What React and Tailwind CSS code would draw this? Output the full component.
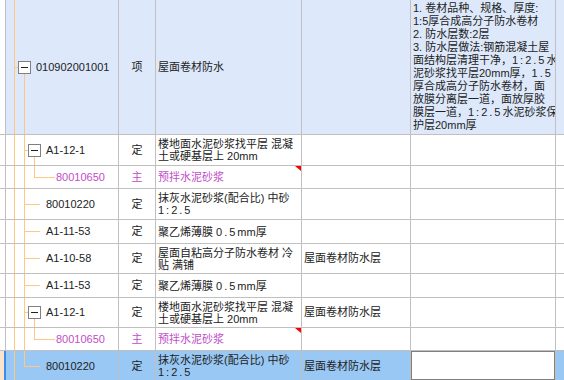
const FONT = "font-['Liberation_Sans','Noto_Sans_CJK_SC',sans-serif]"

const DESC = [
  '1. 卷材品种、规格、厚度:',
  '1:5厚合成高分子防水卷材',
  '2. 防水层数:2层',
  '3. 防水层做法:钢筋混凝土屋',
  '面结构层清理干净，1:2.5水',
  '泥砂浆找平层20mm厚，1.5',
  '厚合成高分子防水卷材，面',
  '放膜分离层一道，面放厚胶',
  '膜层一道，1:2.5水泥砂浆保',
  '护层20mm厚',
]

const ROWS = [
  { h: 135, code: '010902001001', level: 0, box: true, type: '项', name: ['屋面卷材防水'], top: true },
  { h: 31, code: 'A1-12-1', level: 1, box: true, type: '定', name: ['楼地面水泥砂浆找平层 混凝', '土或硬基层上 20mm'] },
  { h: 23, code: '80010650', level: 2, type: '主', name: ['预拌水泥砂浆'], purple: true },
  { h: 31, code: '80010220', level: 1, type: '定', name: ['抹灰水泥砂浆(配合比) 中砂', '1:2.5'] },
  { h: 24, code: 'A1-11-53', level: 1, type: '定', name: ['聚乙烯薄膜 0.5mm厚'] },
  { h: 30, code: 'A1-10-58', level: 1, type: '定', name: ['屋面自粘高分子防水卷材 冷', '贴 满铺'], feat: '屋面卷材防水层' },
  { h: 24, code: 'A1-11-53', level: 1, type: '定', name: ['聚乙烯薄膜 0.5mm厚'] },
  { h: 30, code: 'A1-12-1', level: 1, box: true, type: '定', name: ['楼地面水泥砂浆找平层 混凝', '土或硬基层上 20mm'], feat: '屋面卷材防水层' },
  { h: 23, code: '80010650', level: 2, type: '主', name: ['预拌水泥砂浆'], purple: true },
  { h: 31, code: '80010220', level: 1, type: '定', name: ['抹灰水泥砂浆(配合比) 中砂', '1:2.5'], feat: '屋面卷材防水层', selected: true, last: true },
]

// "1:2.5" and "0.5" render wide in the original grid font
function Wide({ text }) {
  const parts = text.split(/(1:2\.5|0\.5|1\.5)/)
  return parts.map((p, i) =>
    /^(1:2\.5|0\.5|1\.5)$/.test(p)
      ? <span key={i} className="tracking-[2px]">{p}</span>
      : <span key={i}>{p}</span>
  )
}

const TREE = '#ffc77f'

function Minus({ x, y }) {
  return (
    <g>
      <rect x={x + 0.5} y={y + 0.5} width="12" height="12" fill="#fff" stroke="#808080" />
      <line x1={x + 3} x2={x + 10} y1={y + 6.5} y2={y + 6.5} stroke="#222" />
    </g>
  )
}

// tree connectors drawn as one svg laid over the code cell
function Tree({ row }) {
  const h = row.h - 1
  const c = Math.floor(h / 2)
  const v = (x, y1, y2) => <line x1={x + 0.5} x2={x + 0.5} y1={y1} y2={y2} stroke={TREE} />
  const hz = (x1, x2, y) => <line x1={x1} x2={x2} y1={y + 0.5} y2={y + 0.5} stroke={TREE} />
  return (
    <svg className="absolute inset-0 pointer-events-none" width="113" height={h} shapeRendering="crispEdges">
      {v(8, 0, h)}
      {row.level === 0 && (
        <>
          {hz(8, 12, c)}
          {v(18, c + 7, h)}
          <Minus x={12} y={c - 6} />
        </>
      )}
      {row.level === 1 && (
        <>
          {v(18, 0, row.last ? c : h)}
          {row.box ? (
            <>
              {hz(18, 22, c)}
              {v(28, c + 7, h)}
              <Minus x={22} y={c - 6} />
            </>
          ) : hz(18, 34, c)}
        </>
      )}
      {row.level === 2 && (
        <>
          {v(18, 0, h)}
          {v(28, 0, c)}
          {hz(28, 49, c)}
        </>
      )}
    </svg>
  )
}

function Row({ row }) {
  const bg = row.top ? 'bg-[#dde9fb]' : row.selected ? 'bg-[#99c8f4]' : 'bg-white'
  const ink = row.purple ? 'text-[#bf4dc7]' : 'text-[#222]'
  const pad = row.level === 0 ? 'pl-[30px]' : row.level === 1 ? 'pl-[40px]' : 'pl-[50px]'
  return (
    <div className={`flex border-b border-[#c0c0c0] ${bg}`} style={{ height: row.h }}>
      <div className={row.selected
        ? 'w-[6px] shrink-0 bg-[#fde3c9] border-r-2 border-[#3b8beb]'
        : 'w-[6px] shrink-0 bg-white border-r border-[#c0c0c0]'} />
      <div className={`relative w-[113px] shrink-0 border-r border-[#c0c0c0] flex items-center ${pad} ${ink}`}>
        <Tree row={row} />
        <span className="relative whitespace-nowrap">{row.code}</span>
      </div>
      <div className={`w-[37px] shrink-0 border-r border-[#c0c0c0] flex items-center justify-center ${ink}`}>
        {row.type}
      </div>
      <div className={`relative w-[146px] shrink-0 border-r border-[#c0c0c0] flex flex-col justify-center pl-[2px] leading-[12px] ${ink}`}>
        {row.name.map((l, i) => (
          <div key={i} className="whitespace-nowrap"><Wide text={l} /></div>
        ))}
        {row.purple && (
          <div className="absolute top-0 right-0 w-0 h-0 border-t-[5px] border-t-[#ff0000] border-l-[6px] border-l-transparent" />
        )}
      </div>
      <div className="w-[109px] shrink-0 border-r border-[#c0c0c0] flex items-center pl-[2px] text-[#222] whitespace-nowrap">
        {row.feat}
      </div>
      <div className="relative w-[145px] shrink-0 border-r border-[#c0c0c0] flex flex-col justify-center pl-[2px] leading-[13px] text-[#222] overflow-hidden">
        {row.top && DESC.map((l, i) => (
          <div key={i} className="whitespace-nowrap"><Wide text={l} /></div>
        ))}
        {row.selected && (
          <div className="absolute -left-px -top-px -right-px bottom-0 border-2 border-[#7f7f7f] bg-white" />
        )}
      </div>
      <div className="flex-1" />
    </div>
  )
}

export default function App() {
  return (
    <div className={`w-[564px] h-[380px] overflow-hidden bg-white text-[11px] ${FONT}`}>
      {ROWS.map((r, i) => <Row key={i} row={r} />)}
    </div>
  )
}
